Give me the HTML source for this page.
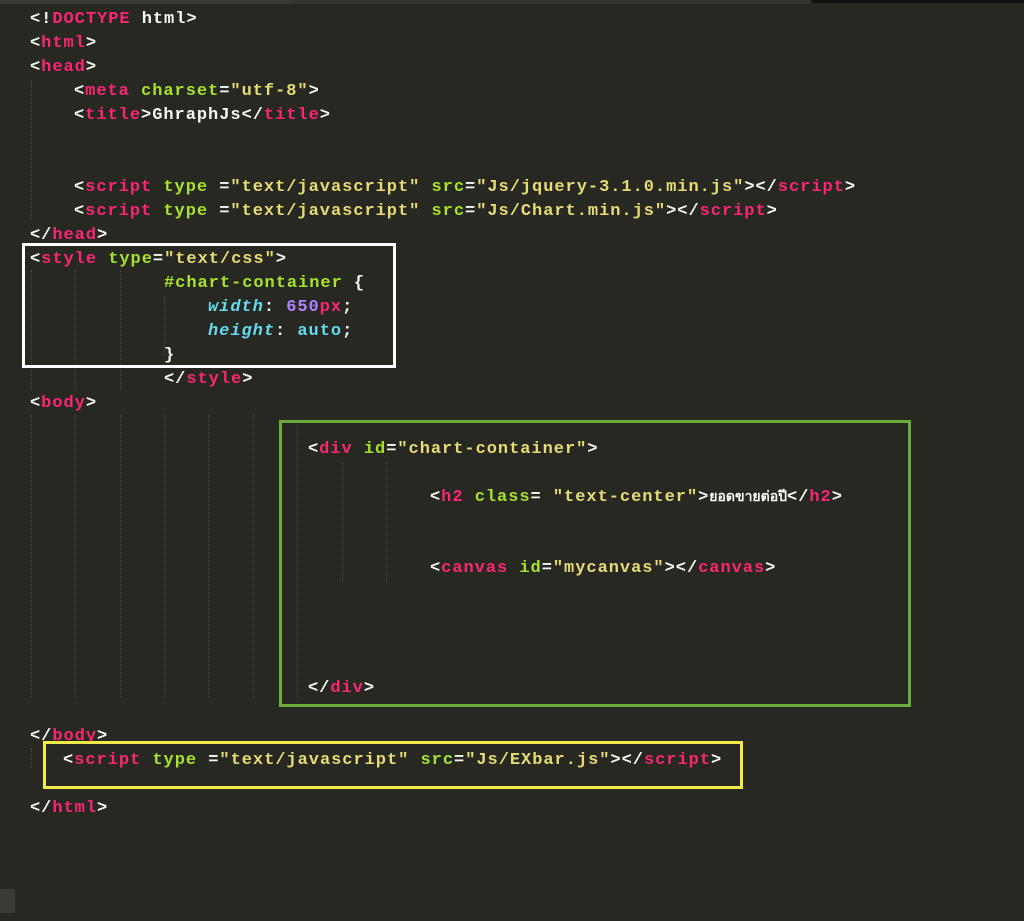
<!DOCTYPE html>
<html><head><meta charset="utf-8"><style>
html,body{margin:0;padding:0;background:#272822;width:1024px;height:921px;overflow:hidden;position:relative}
.l{position:absolute;height:24px;line-height:24px;margin-top:2px;font-family:"Liberation Mono","DejaVu Sans Mono",monospace;font-size:17px;letter-spacing:0.97px;color:#f8f8f2;white-space:pre;font-weight:bold}
.t{color:#f92672}.a{color:#a6e22e}.s{color:#e6db74}.c{color:#66d9ef;font-style:italic}.p{color:#ae81ff}.b{color:#66d9ef}
.box{position:absolute;box-sizing:border-box}
.g{position:absolute;width:0;border-left:1px dotted #4a4a42}
</style></head><body>
<div style="position:absolute;left:0;top:0;width:290px;height:4px;background:#3a3a36"></div>
<div style="position:absolute;left:290px;top:0;width:520px;height:4px;background:#35352f"></div>
<div style="position:absolute;left:812px;top:0;width:212px;height:3px;background:#111"></div>
<div style="position:absolute;left:0;top:889px;width:15px;height:24px;background:#3b3b34"></div>

<div class="g" style="left:31px;top:80px;height:140px"></div>
<div class="g" style="left:31px;top:270px;height:120px"></div>
<div class="g" style="left:75px;top:270px;height:120px"></div>
<div class="g" style="left:120px;top:270px;height:120px"></div>
<div class="g" style="left:164px;top:296px;height:60px"></div>
<div class="g" style="left:31px;top:415px;height:282px"></div>
<div class="g" style="left:75px;top:415px;height:282px"></div>
<div class="g" style="left:120px;top:415px;height:282px"></div>
<div class="g" style="left:164px;top:415px;height:282px"></div>
<div class="g" style="left:208px;top:415px;height:282px"></div>
<div class="g" style="left:253px;top:415px;height:282px"></div>
<div class="g" style="left:297px;top:425px;height:272px"></div>
<div class="g" style="left:342px;top:462px;height:120px"></div>
<div class="g" style="left:386px;top:462px;height:120px"></div>
<div class="g" style="left:31px;top:748px;height:20px"></div>

<div class="l" style="left:30px;top:6px">&lt;!<span class="t">DOCTYPE</span> html&gt;</div>
<div class="l" style="left:30px;top:30px">&lt;<span class="t">html</span>&gt;</div>
<div class="l" style="left:30px;top:54px">&lt;<span class="t">head</span>&gt;</div>
<div class="l" style="left:74px;top:78px">&lt;<span class="t">meta</span> <span class="a">charset</span>=<span class="s">"utf-8"</span>&gt;</div>
<div class="l" style="left:74px;top:102px">&lt;<span class="t">title</span>&gt;GhraphJs&lt;/<span class="t">title</span>&gt;</div>
<div class="l" style="left:74px;top:174px">&lt;<span class="t">script</span> <span class="a">type</span> =<span class="s">"text/javascript"</span> <span class="a">src</span>=<span class="s">"Js/jquery-3.1.0.min.js"</span>&gt;&lt;/<span class="t">script</span>&gt;</div>
<div class="l" style="left:74px;top:198px">&lt;<span class="t">script</span> <span class="a">type</span> =<span class="s">"text/javascript"</span> <span class="a">src</span>=<span class="s">"Js/Chart.min.js"</span>&gt;&lt;/<span class="t">script</span>&gt;</div>
<div class="l" style="left:30px;top:222px">&lt;/<span class="t">head</span>&gt;</div>
<div class="l" style="left:30px;top:246px">&lt;<span class="t">style</span> <span class="a">type</span>=<span class="s">"text/css"</span>&gt;</div>
<div class="l" style="left:164px;top:270px"><span class="a">#chart-container</span> {</div>
<div class="l" style="left:208px;top:294px"><span class="c">width</span>: <span class="p">650</span><span class="t">px</span>;</div>
<div class="l" style="left:208px;top:318px"><span class="c">height</span>: <span class="b">auto</span>;</div>
<div class="l" style="left:164px;top:342px">}</div>
<div class="l" style="left:164px;top:366px">&lt;/<span class="t">style</span>&gt;</div>
<div class="l" style="left:30px;top:390px">&lt;<span class="t">body</span>&gt;</div>
<div class="l" style="left:308px;top:436px">&lt;<span class="t">div</span> <span class="a">id</span>=<span class="s">"chart-container"</span>&gt;</div>
<div class="l" style="left:430px;top:483px">&lt;<span class="t">h2</span> <span class="a">class</span>= <span class="s">"text-center"</span>&gt;<span style="letter-spacing:0;font-family:'DejaVu Sans',sans-serif;font-size:14px">ยอดขายต่อปี</span>&lt;/<span class="t">h2</span>&gt;</div>
<div class="l" style="left:430px;top:555px">&lt;<span class="t">canvas</span> <span class="a">id</span>=<span class="s">"mycanvas"</span>&gt;&lt;/<span class="t">canvas</span>&gt;</div>
<div class="l" style="left:308px;top:675px">&lt;/<span class="t">div</span>&gt;</div>
<div class="l" style="left:30px;top:723px">&lt;/<span class="t">body</span>&gt;</div>
<div class="l" style="left:63px;top:747px">&lt;<span class="t">script</span> <span class="a">type</span> =<span class="s">"text/javascript"</span> <span class="a">src</span>=<span class="s">"Js/EXbar.js"</span>&gt;&lt;/<span class="t">script</span>&gt;</div>
<div class="l" style="left:30px;top:795px">&lt;/<span class="t">html</span>&gt;</div>

<div class="box" style="left:22px;top:243px;width:374px;height:125px;border:3px solid #fff"></div>
<div class="box" style="left:279px;top:420px;width:632px;height:287px;border:3px solid #6aab3c"></div>
<div class="box" style="left:43px;top:741px;width:700px;height:48px;border:3px solid #f2e94a"></div>
</body></html>
